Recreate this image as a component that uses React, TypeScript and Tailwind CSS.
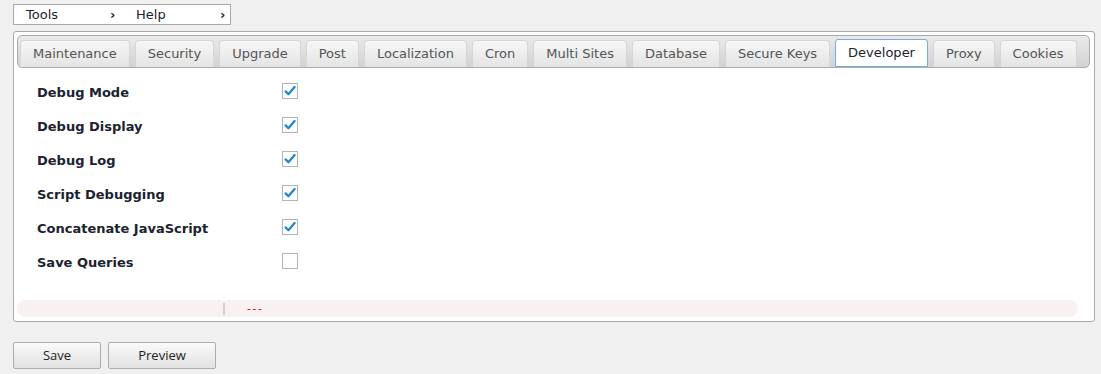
import React from "react";

const tabs = [
  "Maintenance",
  "Security",
  "Upgrade",
  "Post",
  "Localization",
  "Cron",
  "Multi Sites",
  "Database",
  "Secure Keys",
  "Developer",
  "Proxy",
  "Cookies",
];

const options = [
  { label: "Debug Mode", checked: true },
  { label: "Debug Display", checked: true },
  { label: "Debug Log", checked: true },
  { label: "Script Debugging", checked: true },
  { label: "Concatenate JavaScript", checked: true },
  { label: "Save Queries", checked: false },
];

const Checkbox = ({ checked }: { checked: boolean }) => (
  <div className="mb-[4px] flex h-[16px] w-[16px] items-center justify-center border border-[#b3b3b3] bg-white">
    {checked && (
      <svg width="14" height="14" viewBox="0 0 14 14">
        <path
          d="M2.6 7.4 L5.4 10.2 L11.6 3"
          fill="none"
          stroke="#1e88d0"
          strokeWidth="2.3"
          strokeLinecap="round"
          strokeLinejoin="round"
        />
      </svg>
    )}
  </div>
);

export default function App() {
  return (
    <div className="h-[374px] w-full overflow-hidden bg-[#f0f0f0] pt-[4px] font-['DejaVu_Sans',sans-serif] text-[13px] text-[#1c2330]">
      {/* menu bar */}
      <div className="ml-[13px] flex h-[21px] w-[218px] overflow-hidden border border-[#a8a8a8] bg-white leading-[19px]">
        {["Tools", "Help"].map((m) => (
          <div key={m} className="flex w-[110px] shrink-0">
            <span className="w-[96px] pl-[12px]">{m}</span>
            <span className="font-bold">›</span>
          </div>
        ))}
      </div>

      {/* panel */}
      <div className="ml-[13px] mt-[6px] w-[1082px] rounded-[3px] border border-[#a9a9a9] bg-white px-[3px] pb-[4px] pt-[3px]">
        <div className="flex h-[33px] w-[1073px] items-end gap-[5px] rounded-[5px] border border-[#ababab] bg-gradient-to-b from-[#eaeaea] to-[#d2d2d2] pl-[2px]">
          {tabs.map((t) =>
            t === "Developer" ? (
              <div
                key={t}
                className="flex h-[28px] items-center rounded-t-[3px] border border-[#79ade2] bg-white px-[12px] text-[#20242c]"
              >
                {t}
              </div>
            ) : (
              <div
                key={t}
                className="flex h-[27px] items-center rounded-t-[4px] border border-b-0 border-[#d6d6d6] bg-gradient-to-b from-[#f6f6f6] to-[#e4e4e4] px-[12px] text-[#555]"
              >
                {t}
              </div>
            )
          )}
        </div>

        <div className="mt-[8px] flex flex-col pl-[20px]">
          {options.map((o) => (
            <div key={o.label} className="flex h-[34px] items-center">
              <span className="w-[245px] font-bold text-[#1c2230]">{o.label}</span>
              <Checkbox checked={o.checked} />
            </div>
          ))}
        </div>

        <div className="mt-[20px] flex h-[17px] w-[1061px] items-center rounded-full bg-[#f7f1f1]">
          <div className="ml-[206px] h-[12px] w-[2px] bg-[#d4d0d0]" />
          <span className="ml-[22px] text-[11px] leading-none tracking-[1.5px] text-[#e00000]">---</span>
        </div>
      </div>

      {/* buttons */}
      <div className="ml-[13px] mt-[20px] flex gap-[7px] font-['Open_Sans',sans-serif] text-[13px] text-[#222]">
        <button className="h-[27px] w-[88px] rounded-[2px] border border-[#adadad] bg-gradient-to-b from-[#fafafa] to-[#e1e1e1]">
          Save
        </button>
        <button className="h-[27px] w-[108px] rounded-[2px] border border-[#adadad] bg-gradient-to-b from-[#fafafa] to-[#e1e1e1]">
          Preview
        </button>
      </div>
    </div>
  );
}
